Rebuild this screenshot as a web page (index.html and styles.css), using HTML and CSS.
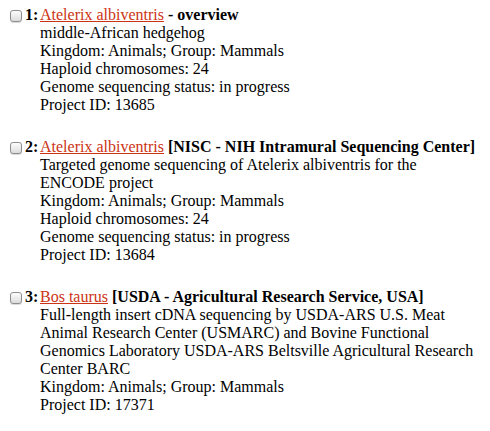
FILE: index.html
```html
<!DOCTYPE html>
<html lang="en">
<head>
  <meta charset="UTF-8">
  <title>Genome Projects</title>
  <link rel="stylesheet" href="styles.css">
</head>
<body>

  <div class="results">
    <div class="item">
      <div class="title">
        <input type="checkbox" class="pick">
        <b class="num">1:</b>
        <span class="head"><a href="#">Atelerix albiventris</a> <b>- overview</b></span>
      </div>
      <div class="desc">
        middle-African hedgehog<br>
        Kingdom: Animals; Group: Mammals<br>
        Haploid chromosomes: 24<br>
        Genome sequencing status: in progress<br>
        Project ID: 13685
      </div>
    </div>

    <div class="item">
      <div class="title">
        <input type="checkbox" class="pick">
        <b class="num">2:</b>
        <span class="head"><a href="#">Atelerix albiventris</a> <b>[NISC - NIH Intramural Sequencing Center]</b></span>
      </div>
      <div class="desc">
        Targeted genome sequencing of Atelerix albiventris for the ENCODE project<br>
        Kingdom: Animals; Group: Mammals<br>
        Haploid chromosomes: 24<br>
        Genome sequencing status: in progress<br>
        Project ID: 13684
      </div>
    </div>

    <div class="item">
      <div class="title">
        <input type="checkbox" class="pick">
        <b class="num">3:</b>
        <span class="head"><a href="#">Bos taurus</a> <b>[USDA - Agricultural Research Service, USA]</b></span>
      </div>
      <div class="desc">
        Full-length insert cDNA sequencing by USDA-ARS U.S. Meat Animal Research Center (USMARC) and Bovine Functional Genomics Laboratory USDA-ARS Beltsville Agricultural Research Center BARC<br>
        Kingdom: Animals; Group: Mammals<br>
        Project ID: 17371
      </div>
    </div>
  </div>

</body>
</html>
```

FILE: styles.css
```css
body {
  margin: 0;
  font-family: "Liberation Serif", "Times New Roman", serif;
  font-size: 16px;
  line-height: 18px;
  color: #000;
  background-color: #fff;
}

.results {
  padding: 6px 0 0 10px;
  width: 466px;
}

.item {
  margin-bottom: 24px;
}

.title {
  display: flex;
  align-items: baseline;
}

.pick {
  appearance: none;
  -webkit-appearance: none;
  width: 12px;
  height: 12px;
  margin: 0 3px 0 0;
  border: 1px solid #8d8d8d;
  border-radius: 3px;
  background: linear-gradient(#fdfdfd, #dcdcdc);
  box-shadow: 0 1px 1px rgba(0, 0, 0, 0.15);
  position: relative;
  top: 2px;
  flex: none;
}

.num {
  width: 15px;
  flex: none;
}

.head a {
  color: #cc3314;
}

.desc {
  padding-left: 30px;
}
```
